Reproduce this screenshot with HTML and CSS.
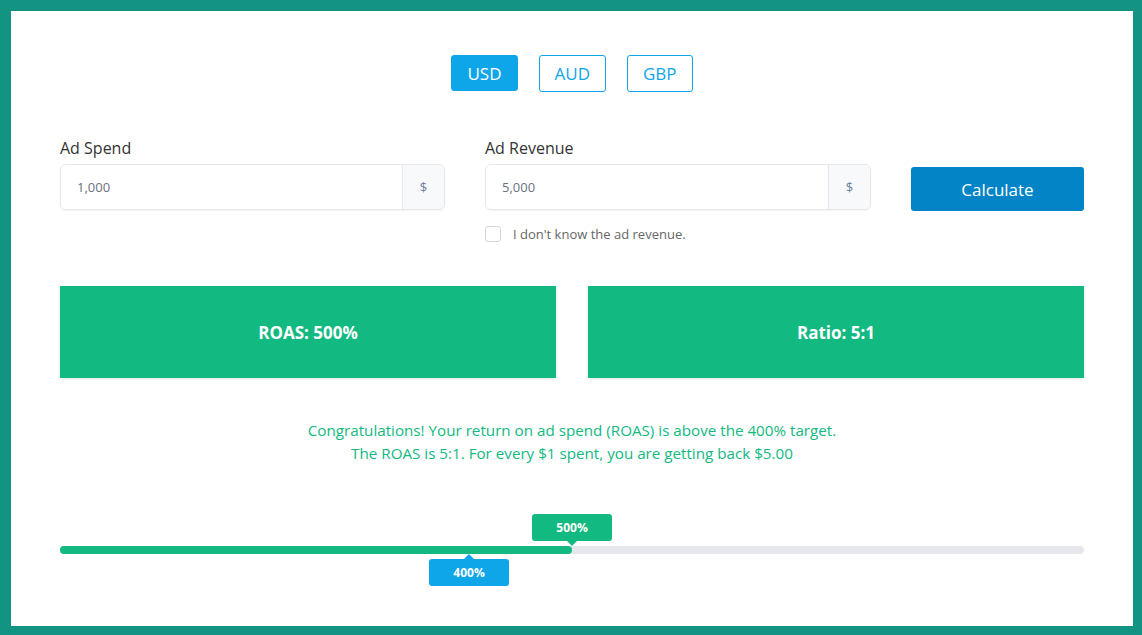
FILE: index.html
```html
<!DOCTYPE html>
<html lang="en">
<head>
  <meta charset="UTF-8">
  <title>ROAS Calculator</title>
  <link rel="stylesheet" href="styles.css">
</head>
<body>
  <div class="page">
    <div class="calc">

      <div class="currencies">
        <button class="cur active">USD</button>
        <button class="cur">AUD</button>
        <button class="cur">GBP</button>
      </div>

      <div class="form-row">
        <div class="field">
          <label>Ad Spend</label>
          <div class="input-group">
            <input type="text" placeholder="1,000">
            <span class="addon">$</span>
          </div>
        </div>
        <div class="field field-wide">
          <label>Ad Revenue</label>
          <div class="input-group">
            <input type="text" placeholder="5,000">
            <span class="addon">$</span>
          </div>
          <div class="check">
            <span class="box"></span>
            <span>I don't know the ad revenue.</span>
          </div>
        </div>
        <button class="calc-btn">Calculate</button>
      </div>

      <div class="results">
        <div class="result">ROAS: 500%</div>
        <div class="result">Ratio: 5:1</div>
      </div>

      <div class="message">
        <p>Congratulations! Your return on ad spend (ROAS) is above the 400% target.</p>
        <p>The ROAS is 5:1. For every $1 spent, you are getting back $5.00</p>
      </div>

      <div class="slider">
        <div class="track">
          <div class="fill" style="width: 50%"></div>
        </div>
        <div class="tip tip-value">500%</div>
        <div class="tip tip-target">400%</div>
      </div>

    </div>
  </div>
</body>
</html>
```

FILE: styles.css
```css
* {
  margin: 0;
  padding: 0;
  box-sizing: border-box;
}

html, body {
  margin: 0;
  padding: 0;
  background-color: #139483;
  font-family: 'Open Sans', sans-serif;
}

.page {
  margin: 11px 9px 9px 11px;
  height: 615px;
  background-color: #fff;
}

.calc {
  width: 1024px;
  margin: 0 auto;
  padding-top: 44px;
}

.currencies {
  display: flex;
  justify-content: center;
  gap: 21px;
}

.cur {
  font-family: inherit;
  font-size: 17px;
  height: 37px;
  padding: 0 15px;
  background: #fff;
  color: #0ea5e9;
  border: 1px solid #0ea5e9;
  border-radius: 3px;
}

.cur.active {
  background: #0ea5e9;
  color: #fff;
  height: 36px;
}

.form-row {
  display: flex;
  gap: 40px;
  margin-top: 45px;
}

.field {
  width: 385px;
}

.field-wide {
  width: 386px;
}

.field label {
  display: block;
  font-size: 16px;
  line-height: 22px;
  color: #333;
  margin-bottom: 5px;
}

.input-group {
  display: flex;
  height: 46px;
  border: 1px solid #e5e7eb;
  border-radius: 6px;
  box-shadow: 0 1px 2px rgba(0,0,0,0.05);
  overflow: hidden;
}

.input-group input {
  flex: 1;
  border: none;
  outline: none;
  padding: 0 16px;
  font-family: inherit;
  font-size: 13px;
  color: #333;
}

.input-group input::placeholder {
  color: #6b7280;
}

.addon {
  width: 42px;
  display: flex;
  align-items: center;
  justify-content: center;
  background: #f8f9fb;
  border-left: 1px solid #e5e7eb;
  color: #6b7fa0;
  font-size: 13px;
}

.check {
  display: flex;
  align-items: center;
  gap: 12px;
  margin-top: 15px;
  font-size: 13px;
  color: #666;
}

.check .box {
  width: 16px;
  height: 16px;
  border: 1px solid #d1d5db;
  border-radius: 3px;
}

.calc-btn {
  width: 173px;
  height: 44px;
  margin-top: 30px;
  background: #0284c7;
  color: #fff;
  border: none;
  border-radius: 3px;
  font-family: inherit;
  font-size: 17px;
}

.results {
  display: flex;
  gap: 32px;
  margin-top: 43px;
}

.result {
  flex: 1;
  height: 92px;
  display: flex;
  align-items: center;
  justify-content: center;
  background: #12b981;
  color: #fff;
  font-size: 17px;
  font-weight: bold;
  box-shadow: 0 1px 3px rgba(0,0,0,0.12);
}

.message {
  margin-top: 41px;
  text-align: center;
  color: #12b981;
  font-size: 15.2px;
  line-height: 23px;
}

.slider {
  position: relative;
  margin-top: 81px;
  height: 8px;
}

.track {
  height: 8px;
  background: #e5e7eb;
  border-radius: 4px;
}

.fill {
  height: 8px;
  background: #12b981;
  border-radius: 4px;
}

.tip {
  position: absolute;
  width: 80px;
  height: 27px;
  line-height: 27px;
  text-align: center;
  color: #fff;
  font-size: 12px;
  font-weight: bold;
  border-radius: 3px;
}

.tip::after {
  content: "";
  position: absolute;
  left: 50%;
  margin-left: -5px;
  border: 5px solid transparent;
}

.tip-value {
  left: 472px;
  top: -32px;
  background: #12b981;
}

.tip-value::after {
  top: 100%;
  border-top-color: #12b981;
}

.tip-target {
  left: 369px;
  top: 13px;
  background: #0ea5e9;
}

.tip-target::after {
  bottom: 100%;
  border-bottom-color: #0ea5e9;
}
```
